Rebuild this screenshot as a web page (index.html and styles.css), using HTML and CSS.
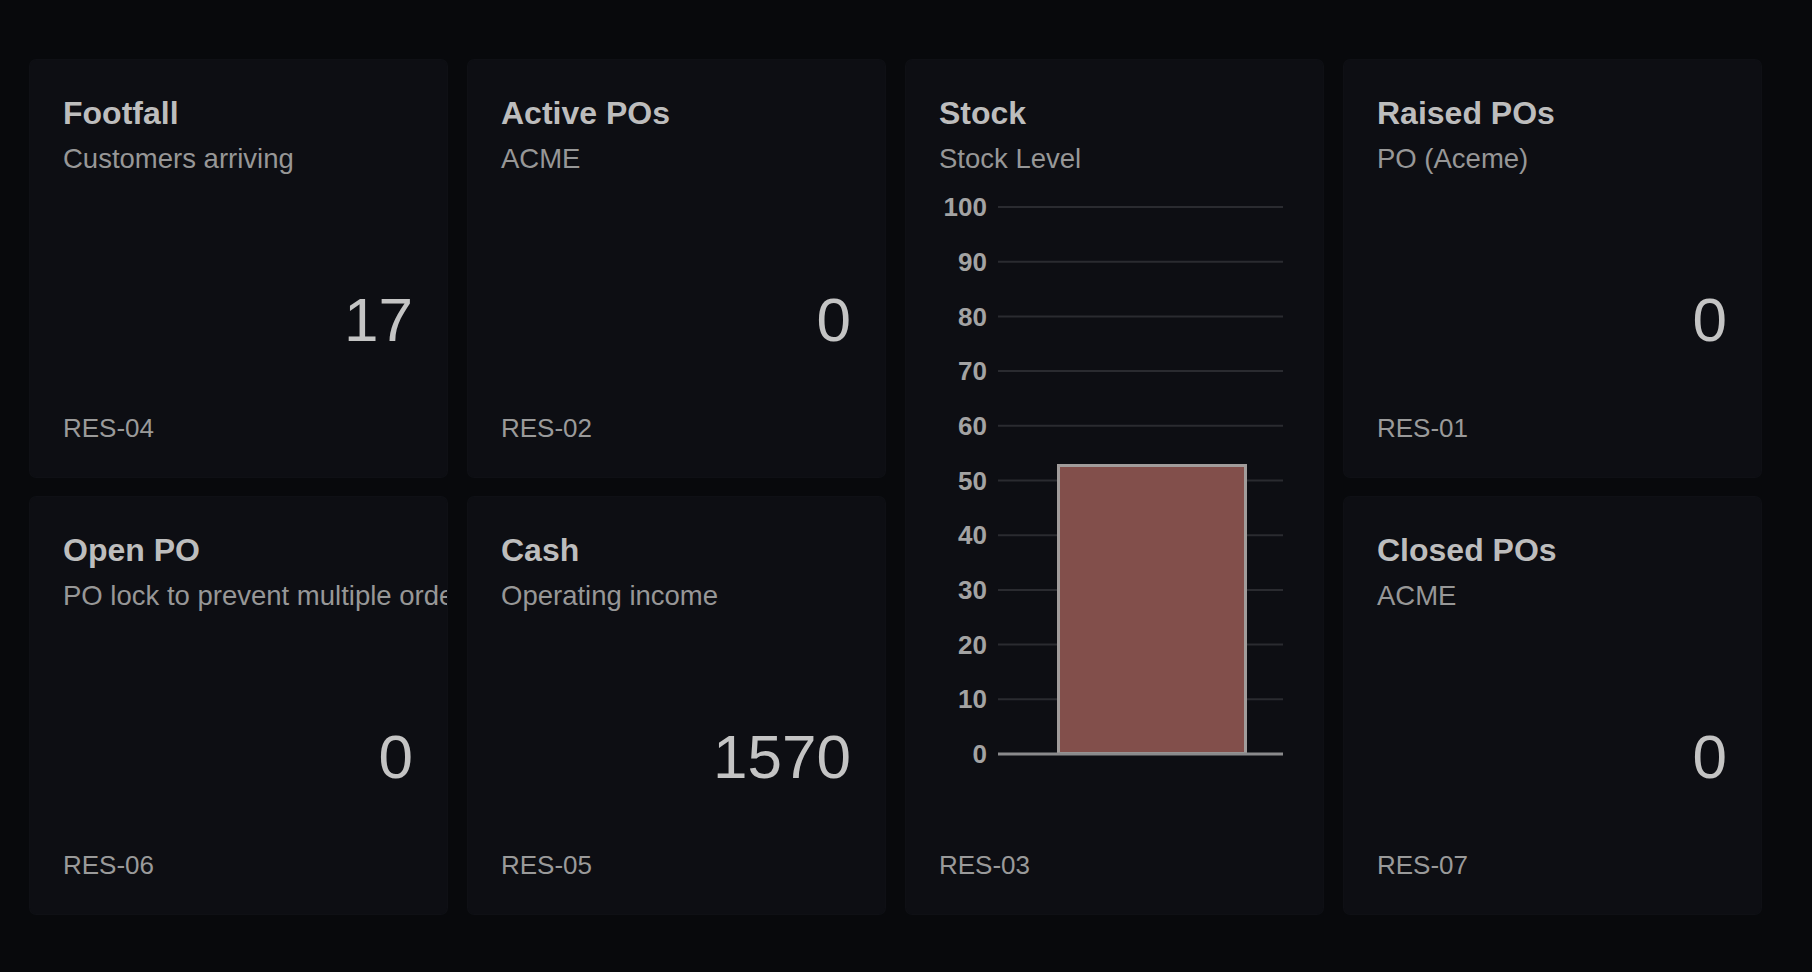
FILE: index.html
```html
<!DOCTYPE html>
<html lang="en">
<head>
<meta charset="utf-8">
<title>Dashboard</title>
<link rel="stylesheet" href="styles.css">
</head>
<body>
<main class="board">
  <section class="card">
    <h2 class="title">Footfall</h2>
    <p class="subtitle">Customers arriving</p>
    <div class="value">17</div>
    <div class="footer">RES-04</div>
  </section>
  <section class="card">
    <h2 class="title">Active POs</h2>
    <p class="subtitle">ACME</p>
    <div class="value">0</div>
    <div class="footer">RES-02</div>
  </section>
  <section class="card card-tall">
    <h2 class="title">Stock</h2>
    <p class="subtitle">Stock Level</p>
    <svg class="chart" width="350" height="600" viewBox="0 0 350 600">
      <g class="grid">
        <line x1="59" x2="344" y1="32" y2="32"/>
        <line x1="59" x2="344" y1="86.7" y2="86.7"/>
        <line x1="59" x2="344" y1="141.4" y2="141.4"/>
        <line x1="59" x2="344" y1="196.1" y2="196.1"/>
        <line x1="59" x2="344" y1="250.8" y2="250.8"/>
        <line x1="59" x2="344" y1="305.5" y2="305.5"/>
        <line x1="59" x2="344" y1="360.2" y2="360.2"/>
        <line x1="59" x2="344" y1="414.9" y2="414.9"/>
        <line x1="59" x2="344" y1="469.6" y2="469.6"/>
        <line x1="59" x2="344" y1="524.3" y2="524.3"/>
      </g>
      <rect class="bar" x="119.5" y="290.5" width="187" height="288"/>
      <line class="axis" x1="59" x2="344" y1="579" y2="579"/>
      <g class="labels">
        <text x="48" y="41">100</text>
        <text x="48" y="96">90</text>
        <text x="48" y="151">80</text>
        <text x="48" y="205">70</text>
        <text x="48" y="260">60</text>
        <text x="48" y="315">50</text>
        <text x="48" y="369">40</text>
        <text x="48" y="424">30</text>
        <text x="48" y="479">20</text>
        <text x="48" y="533">10</text>
        <text x="48" y="588">0</text>
      </g>
    </svg>
    <div class="footer">RES-03</div>
  </section>
  <section class="card">
    <h2 class="title">Raised POs</h2>
    <p class="subtitle">PO (Aceme)</p>
    <div class="value">0</div>
    <div class="footer">RES-01</div>
  </section>
  <section class="card">
    <h2 class="title">Open PO</h2>
    <p class="subtitle">PO lock to prevent multiple orders</p>
    <div class="value">0</div>
    <div class="footer">RES-06</div>
  </section>
  <section class="card">
    <h2 class="title">Cash</h2>
    <p class="subtitle">Operating income</p>
    <div class="value">1570</div>
    <div class="footer">RES-05</div>
  </section>
  <section class="card">
    <h2 class="title">Closed POs</h2>
    <p class="subtitle">ACME</p>
    <div class="value">0</div>
    <div class="footer">RES-07</div>
  </section>
</main>
</body>
</html>
```

FILE: styles.css
```css
html, body {
  margin: 0;
  padding: 0;
  background: #08090c;
  height: 100%;
}

body {
  font-family: "Liberation Sans", Arial, sans-serif;
  color: #c2c2c2;
}

.board {
  display: grid;
  grid-template-columns: repeat(4, 417px);
  grid-template-rows: 417px 417px;
  column-gap: 21px;
  row-gap: 20px;
  padding: 60px 0 0 30px;
}

.card {
  background: #0d0e13;
  border-radius: 6px;
  padding: 33px 34px 33px 33px;
  display: flex;
  flex-direction: column;
  overflow: hidden;
  box-shadow: 0 0 0 1px #0f1015;
}

.card-tall {
  grid-column: 3;
  grid-row: 1 / span 2;
}

.title {
  margin: 0;
  font-size: 32px;
  line-height: 40px;
  font-weight: 700;
  color: #bdbdbd;
  white-space: nowrap;
}

.subtitle {
  margin: 10px 0 0 0;
  font-size: 27.5px;
  line-height: 32px;
  color: #979797;
  white-space: nowrap;
}

.value {
  margin-top: 110px;
  text-align: right;
  font-size: 62px;
  line-height: 70px;
  color: #c4c4c4;
}

.footer {
  margin-top: auto;
  font-size: 26px;
  line-height: 32px;
  color: #9a9a9a;
}

.chart {
  display: block;
}

.chart .grid line {
  stroke: #2a2b30;
  stroke-width: 2;
}

.chart .axis {
  stroke: #8a8a8c;
  stroke-width: 3;
}

.chart .bar {
  fill: #824f4b;
  stroke: #a19c9b;
  stroke-width: 3;
}

.chart .labels text {
  font-family: "Liberation Sans", Arial, sans-serif;
  font-size: 26px;
  font-weight: 700;
  fill: #a3a3a3;
  text-anchor: end;
}
```
